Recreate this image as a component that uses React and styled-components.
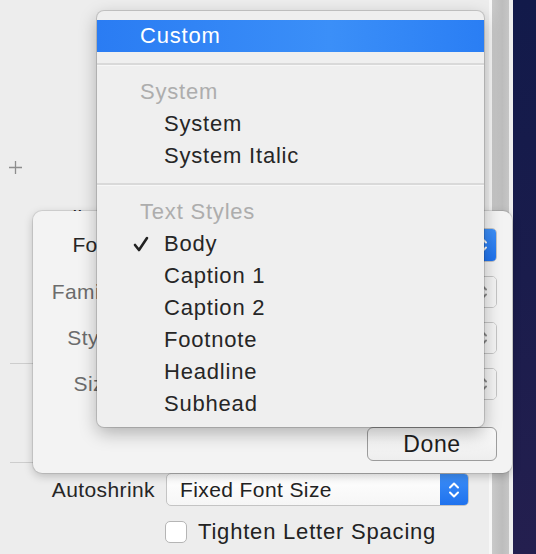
import React from 'react';
import styled, { createGlobalStyle } from 'styled-components';

const GlobalStyle = createGlobalStyle`
  html, body { margin: 0; padding: 0; }
  body {
    font-family: "Liberation Sans", Arial, sans-serif;
    background: #ededed;
  }
`;

const Screen = styled.div`
  position: relative;
  display: flex;
  width: 536px;
  height: 554px;
  overflow: hidden;
`;

const Inspector = styled.div`
  display: flex;
  flex-direction: column;
  flex: none;
  width: 489px;
  background: #ededed;
`;

const Edge = styled.div`
  flex: none;
  width: 3px;
  background: #f7f7f7;
`;

const Track = styled.div`
  flex: none;
  width: 17px;
  background: linear-gradient(90deg, #c9c9c9, #bdbdbd 60%, #c6c6c6);
`;

const Gap = styled.div`
  flex: none;
  width: 4px;
  background: #efefef;
`;

const Desktop = styled.div`
  flex: 1;
  background: linear-gradient(180deg, #121a4a 0%, #1a1c4c 50%, #241f4f 100%);
`;

const PlusButton = styled.div`
  display: flex;
  margin: 161px 0 0 9px;
  width: 13px;
  height: 13px;
`;

const FieldRow = styled.div`
  display: grid;
  grid-template-columns: 155px 303px;
  column-gap: 11px;
  align-items: center;
  margin-top: ${p => p.$top}px;
  height: ${p => p.$height}px;
`;

const Label = styled.div`
  text-align: right;
  font-size: 21px;
  line-height: 24px;
  letter-spacing: 0.4px;
  color: ${p => (p.$dim ? '#6c6c6c' : '#262626')};
  white-space: nowrap;
`;

const Separator = styled.div`
  margin: ${p => p.$top}px 0 0 10px;
  width: 470px;
  height: 1px;
  background: #cdcdcd;
`;

const Popup = styled.div`
  display: flex;
  align-items: stretch;
  height: ${p => p.$height || 32}px;
  box-sizing: border-box;
  border: 1px solid #c4c4c4;
  border-radius: 5px;
  background: linear-gradient(180deg, #ffffff, #f6f6f6);
  overflow: hidden;
`;

const PopupText = styled.div`
  flex: 1;
  display: flex;
  align-items: center;
  padding-left: 13px;
  font-size: 21px;
  letter-spacing: 0.4px;
  color: #222;
`;

const Stepper = styled.div`
  flex: none;
  display: flex;
  align-items: center;
  justify-content: center;
  width: 28px;
  background: ${p => (p.$blue ? 'linear-gradient(180deg, #3d8ff8, #1f72ee)' : '#f4f4f4')};
  border-left: ${p => (p.$blue ? 'none' : '1px solid #d6d6d6')};
`;

const CheckRow = styled.label`
  display: flex;
  align-items: center;
  gap: 11px;
  margin: 15px 0 0 165px;
  height: 22px;
`;

const CheckBox = styled.span`
  flex: none;
  width: 22px;
  height: 22px;
  box-sizing: border-box;
  border: 1px solid #b5b5b5;
  border-radius: 5px;
  background: #fff;
`;

const CheckText = styled.span`
  font-size: 22px;
  letter-spacing: 0.8px;
  color: #222;
  white-space: nowrap;
`;

/* font popover */
const Popover = styled.div`
  position: absolute;
  left: 33px;
  top: 211px;
  width: 479px;
  height: 262px;
  box-sizing: border-box;
  padding: 17px 15px 0 0;
  border-radius: 9px;
  background: #f3f3f3;
  box-shadow: 0 0 0 1px rgba(0, 0, 0, 0.09), 0 3px 10px rgba(0, 0, 0, 0.22);
  display: flex;
  flex-direction: column;
`;

const PopRow = styled.div`
  display: grid;
  grid-template-columns: 83px 369px;
  column-gap: 12px;
  align-items: center;
  margin-bottom: 14px;
`;

const DoneButton = styled.button`
  align-self: flex-end;
  margin-top: 13px;
  width: 130px;
  height: 34px;
  border: 1px solid #9c9c9c;
  border-radius: 6px;
  background: linear-gradient(180deg, #fbfbfb, #eeeeee);
  font-family: "Liberation Sans", Arial, sans-serif;
  font-size: 23px;
  letter-spacing: 0.6px;
  color: #1e1e1e;
  padding: 0;
`;

/* dropdown menu */
const Menu = styled.div`
  position: absolute;
  left: 97px;
  top: 11px;
  width: 387px;
  height: 416px;
  box-sizing: border-box;
  padding: 9px 0 7px;
  border-radius: 7px;
  background: #efefef;
  box-shadow: 0 0 0 1px rgba(0, 0, 0, 0.14), 0 6px 18px rgba(0, 0, 0, 0.28);
  display: flex;
  flex-direction: column;
`;

const Item = styled.div`
  position: relative;
  display: flex;
  align-items: center;
  height: 32px;
  padding-left: ${p => (p.$header || p.$top ? 43 : 67)}px;
  font-size: 22px;
  letter-spacing: 0.8px;
  color: ${p => (p.$selected ? '#fff' : p.$header ? '#adadad' : '#262626')};
  background: ${p => (p.$selected ? 'linear-gradient(90deg, #2a7cf3, #3b8ff8 60%, #2a7ef4)' : 'transparent')};
  white-space: nowrap;
`;

const Check = styled.svg`
  position: absolute;
  left: 35px;
  top: 7px;
`;

const MenuSeparator = styled.div`
  height: 24px;
  display: flex;
  align-items: center;

  &::after {
    content: '';
    flex: 1;
    height: 2px;
    background: #d9d9d9;
    border-bottom: 1px solid #f7f7f7;
  }
`;

const Chevrons = ({ color }) => (
  <svg width="14" height="20" viewBox="0 0 14 20" fill="none" stroke={color} strokeWidth="2" strokeLinecap="round" strokeLinejoin="round">
    <path d="M3 7.5 L7 3.5 L11 7.5" />
    <path d="M3 12.5 L7 16.5 L11 12.5" />
  </svg>
);

const menu = [
  { label: 'Custom', top: true, selected: true },
  { sep: true },
  { label: 'System', header: true },
  { label: 'System' },
  { label: 'System Italic' },
  { sep: true },
  { label: 'Text Styles', header: true },
  { label: 'Body', checked: true },
  { label: 'Caption 1' },
  { label: 'Caption 2' },
  { label: 'Footnote' },
  { label: 'Headline' },
  { label: 'Subhead' },
];

const fields = [
  { label: 'Font', blue: true, value: 'Body' },
  { label: 'Family', dim: true },
  { label: 'Style', dim: true },
  { label: 'Size', dim: true },
];

export default function App() {
  return (
    <Screen>
      <GlobalStyle />
      <Inspector>
        <PlusButton>
          <svg width="13" height="13" viewBox="0 0 13 13" stroke="#8d8d8d" strokeWidth="1.3">
            <path d="M6.5 0 V13 M0 6.5 H13" />
          </svg>
        </PlusButton>
        {/* label sits under the popover; only the tops of its letters show */}
        <FieldRow $top={32} $height={24}>
          <Label>Alignment</Label>
          <div />
        </FieldRow>
        <Separator $top={133} />
        <Separator $top={98} />
        <FieldRow $top={10} $height={33}>
          <Label>Autoshrink</Label>
          <Popup $height={33}>
            <PopupText>Fixed Font Size</PopupText>
            <Stepper $blue>
              <Chevrons color="#fff" />
            </Stepper>
          </Popup>
        </FieldRow>
        <CheckRow>
          <CheckBox />
          <CheckText>Tighten Letter Spacing</CheckText>
        </CheckRow>
      </Inspector>
      <Edge />
      <Track />
      <Gap />
      <Desktop />

      <Popover>
        {fields.map(f => (
          <PopRow key={f.label}>
            <Label $dim={f.dim}>{f.label}</Label>
            <Popup $height={f.blue ? 34 : 32}>
              <PopupText>{f.value}</PopupText>
              <Stepper $blue={f.blue}>
                <Chevrons color={f.blue ? '#fff' : '#8a8a8a'} />
              </Stepper>
            </Popup>
          </PopRow>
        ))}
        <DoneButton>Done</DoneButton>
      </Popover>

      <Menu>
        {menu.map((m, i) =>
          m.sep ? (
            <MenuSeparator key={i} />
          ) : (
            <Item key={i} $header={m.header} $top={m.top} $selected={m.selected}>
              {m.checked && (
                <Check width="18" height="18" viewBox="0 0 18 18" fill="none" stroke="#222" strokeWidth="2.6" strokeLinecap="round" strokeLinejoin="round">
                  <path d="M3 10 L7 15 L15 3" />
                </Check>
              )}
              {m.label}
            </Item>
          )
        )}
      </Menu>
    </Screen>
  );
}
